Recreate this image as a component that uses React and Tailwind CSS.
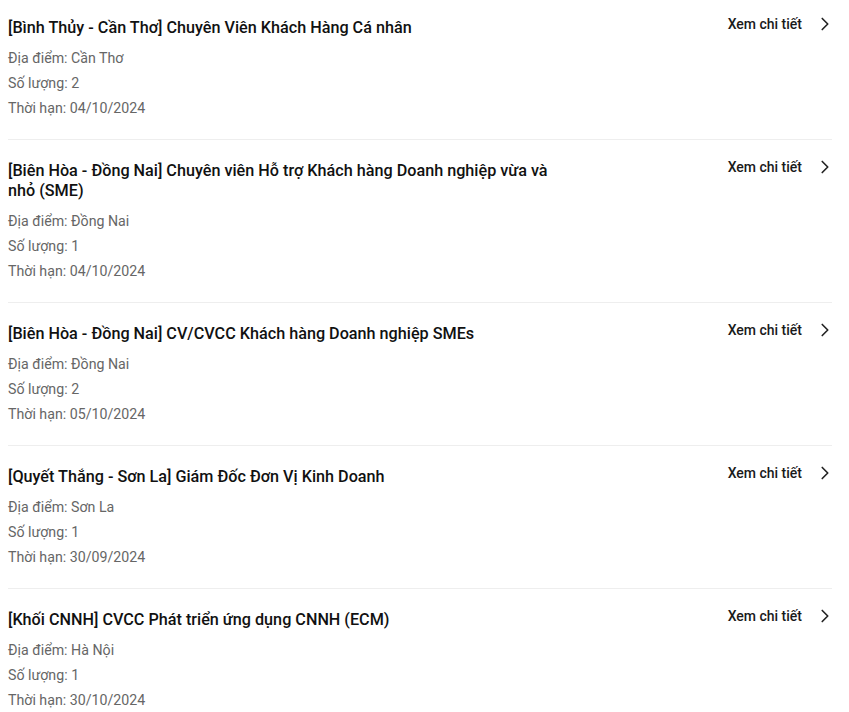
import React from 'react';
import { ChevronRight } from 'lucide-react';

const jobs = [
    { title: '[Bình Thủy - Cần Thơ] Chuyên Viên Khách Hàng Cá nhân', place: 'Cần Thơ', count: 2, deadline: '04/10/2024' },
    { title: '[Biên Hòa - Đồng Nai] Chuyên viên Hỗ trợ Khách hàng Doanh nghiệp vừa và nhỏ (SME)', place: 'Đồng Nai', count: 1, deadline: '04/10/2024' },
    { title: '[Biên Hòa - Đồng Nai] CV/CVCC Khách hàng Doanh nghiệp SMEs', place: 'Đồng Nai', count: 2, deadline: '05/10/2024' },
    { title: '[Quyết Thắng - Sơn La] Giám Đốc Đơn Vị Kinh Doanh', place: 'Sơn La', count: 1, deadline: '30/09/2024' },
    { title: '[Khối CNNH] CVCC Phát triển ứng dụng CNNH (ECM)', place: 'Hà Nội', count: 1, deadline: '30/10/2024' },
];

const App = () => {
    return (
        <div className="min-h-screen bg-white pl-2 pr-[17px] font-['Roboto',_'Liberation_Sans',_sans-serif]">
            {jobs.map((job, i) => (
                <div
                    key={i}
                    className="flex items-start justify-between border-b border-[#eeeeee] pt-[21px] pb-[18px] first:pt-[18px]"
                >
                    <div className="w-[550px]">
                        <h3 className="text-[16.2px] leading-5 font-medium text-[#111111]">{job.title}</h3>
                        <div className="mt-2 text-[14.2px] leading-[25px] text-[#666666]">
                            <p>Địa điểm: {job.place}</p>
                            <p>Số lượng: {job.count}</p>
                            <p>Thời hạn: {job.deadline}</p>
                        </div>
                    </div>
                    <a href="#" className="-mt-[5px] flex items-center gap-[12px] text-sm font-medium text-[#1a1a1a]">
                        Xem chi tiết
                        <ChevronRight size={22} strokeWidth={1.8} className="-mr-1 text-[#222]" />
                    </a>
                </div>
            ))}
        </div>
    );
};

export default App;
